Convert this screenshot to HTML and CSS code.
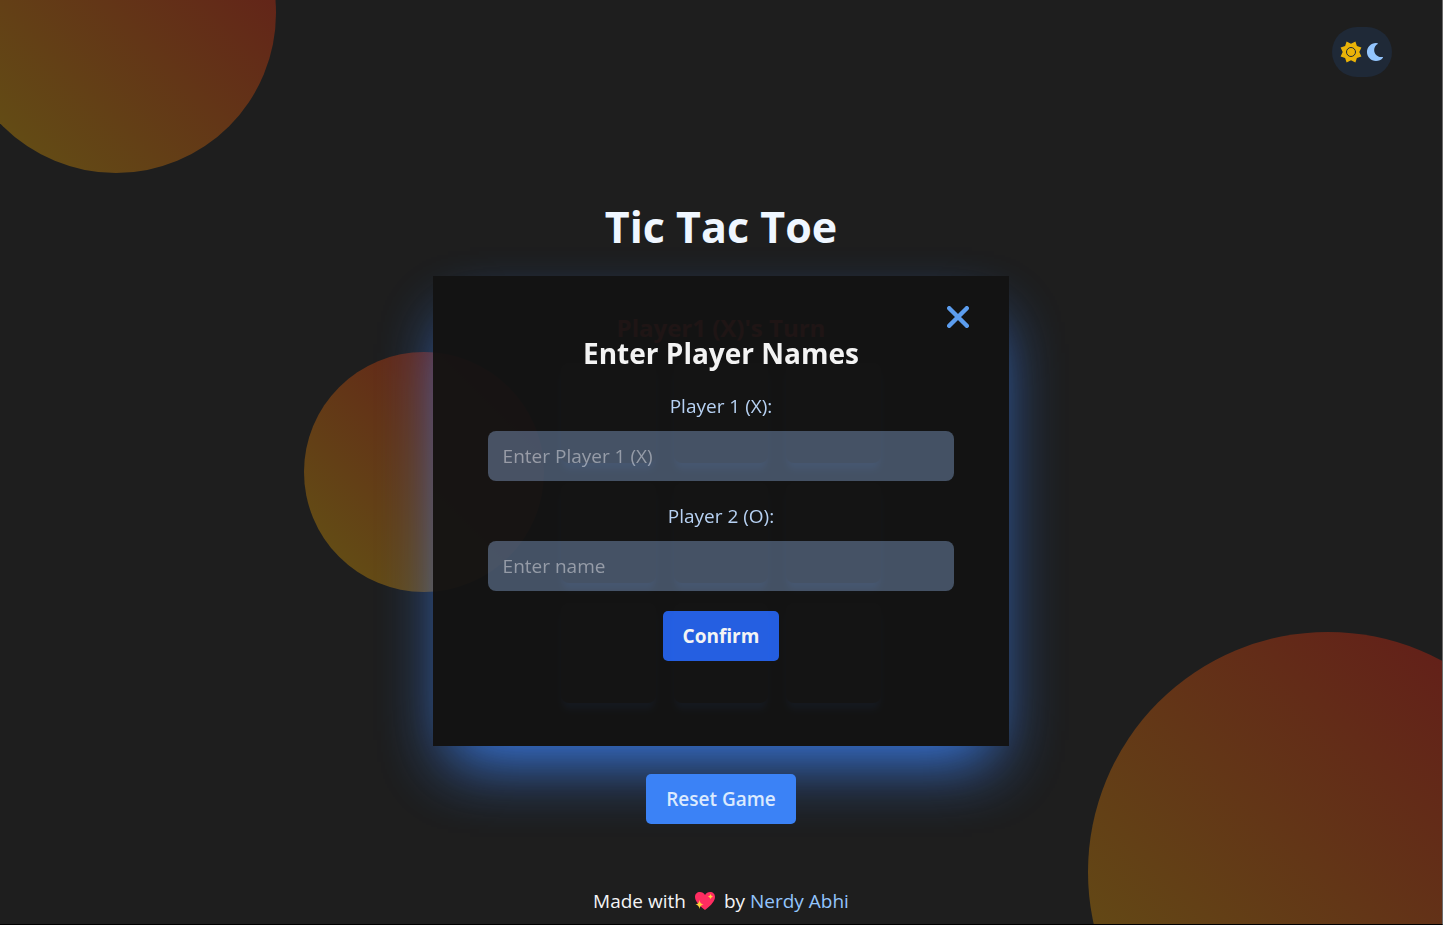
FILE: index.html
```
<!DOCTYPE html>
<html lang="en">
<head>
<meta charset="utf-8">
<title>Tic Tac Toe</title>
<link rel="stylesheet" href="styles.css">
</head>
<body>
<div class="page">
  <div class="circle circle-top"></div>
  <div class="circle circle-middle"></div>
  <div class="circle circle-bottom"></div>

  <header class="topbar">
    <button class="theme-toggle" type="button" aria-label="Toggle theme">
      <svg class="icon-sun" viewBox="-11 -11 22 22" aria-hidden="true">
        <path d="M8.300 0L10.400 4.400L5.900 5.900L4.400 10.400L0 8.300L-4.400 10.400L-5.900 5.900L-10.400 4.400L-8.300 0L-10.400 -4.400L-5.900 -5.900L-4.400 -10.400L0 -8.300L4.400 -10.400L5.900 -5.900L10.400 -4.400Z"/>
        <circle class="sun-ring" r="4.500"/>
      </svg>
      <svg class="icon-moon" viewBox="27 0 458 512" aria-hidden="true"><path d="M283 512C362 512 434 476 482 417C489 408 481 396 470 398C346 422 232 326 232 201C232 129 270 62 333 27C343 21 340 7 329 4A258 258 0 0 0 283 0C142 0 27 114 27 256C27 397 142 512 283 512Z"/></svg>
    </button>
  </header>

  <main class="game">
    <h1 class="title">Tic Tac Toe</h1>
    <section class="panel">
      <h2 class="turn">Player1 (X)'s Turn</h2>
      <div class="board">
        <button class="cell" type="button" aria-label="Cell 1"></button>
        <button class="cell" type="button" aria-label="Cell 2"></button>
        <button class="cell" type="button" aria-label="Cell 3"></button>
        <button class="cell" type="button" aria-label="Cell 4"></button>
        <button class="cell" type="button" aria-label="Cell 5"></button>
        <button class="cell" type="button" aria-label="Cell 6"></button>
        <button class="cell" type="button" aria-label="Cell 7"></button>
        <button class="cell" type="button" aria-label="Cell 8"></button>
        <button class="cell" type="button" aria-label="Cell 9"></button>
      </div>
      <form class="modal" role="dialog" aria-labelledby="modal-title">
        <button class="close" type="button" aria-label="Close">
          <svg viewBox="0 0 20 20" aria-hidden="true"><path d="M2 2L18 18M18 2L2 18"/></svg>
        </button>
        <h2 class="modal-title" id="modal-title">Enter Player Names</h2>
        <label class="label" for="p1">Player 1 (X):</label>
        <input class="field" id="p1" type="text" placeholder="Enter Player 1 (X)">
        <label class="label" for="p2">Player 2 (O):</label>
        <input class="field" id="p2" type="text" placeholder="Enter name">
        <button class="btn btn-confirm" type="button">Confirm</button>
      </form>
    </section>
    <button class="btn btn-reset" type="button">Reset Game</button>
  </main>

  <footer class="footer">
    <span>Made with</span>
    <svg class="heart" viewBox="0 0 22 20" role="img" aria-label="love">
      <path fill="#ff2d61" d="M11 19C8 16.500 1 11.500 1 6C1 3 3 1 6 1C8 1 10 2 11 4C12 2 14 1 16 1C19 1 21 3 21 6C21 11.500 14 16.500 11 19Z"/>
      <path fill="#ffd23e" d="M5.500 9Q6 13 9.500 13.500Q6 14 5.500 18Q5 14 1.500 13.500Q5 13 5.500 9ZM16.500 3Q17 5 19 5.500Q17 6 16.500 8Q16 6 14 5.500Q16 5 16.500 3Z"/>
    </svg>
    <span>by <a class="link" href="#">Nerdy Abhi</a></span>
  </footer>
</div>
</body>
</html>
```

FILE: styles.css
```
* {
  box-sizing: border-box;
}

body {
  margin: 0;
  background: #1e1e1e;
  color: #f3f4f6;
  font-family: "Open Sans", "Noto Sans", sans-serif;
  font-size: 19px;
  line-height: 30px;
}

h1,
h2 {
  margin: 0;
}

button,
input {
  font: inherit;
  border: 0;
}

.page {
  position: relative;
  display: flex;
  flex-direction: column;
  min-height: 100vh;
  overflow: hidden;
  border-right: 1px solid #6b6b6b;
  border-bottom: 1px solid #000;
}

.circle {
  position: absolute;
  border-radius: 50%;
  background: linear-gradient(to top right, #635414, #63171a);
}

.circle-top {
  top: -147px;
  left: -44px;
  width: 320px;
  height: 320px;
}

.circle-middle {
  top: 352px;
  left: 304px;
  width: 240px;
  height: 240px;
}

.circle-bottom {
  right: -126px;
  bottom: -188px;
  width: 480px;
  height: 480px;
}

.topbar {
  position: relative;
  display: flex;
  justify-content: flex-end;
  padding: 27px 50px 0;
}

.theme-toggle {
  display: flex;
  align-items: center;
  gap: 4px;
  height: 50px;
  padding: 0 8px;
  border-radius: 25px;
  background: #1f2937;
}

.icon-sun {
  width: 22px;
  height: 22px;
  fill: #eab308;
}

.sun-ring {
  fill: none;
  stroke: #1f2937;
  stroke-width: 1;
}

.icon-moon {
  width: 18px;
  height: 18px;
  fill: #93c5fd;
}

.game {
  position: relative;
  display: flex;
  flex: 1;
  flex-direction: column;
  align-items: center;
  justify-content: center;
  padding-top: 62px;
}

.title {
  margin-bottom: 24px;
  color: #eff6ff;
  font-size: 43px;
  line-height: 50px;
}

.panel {
  position: relative;
  width: 40%;
  min-width: 480px;
  padding: 34px 128px 43px;
}

.turn {
  margin-bottom: 18px;
  color: #ef4444;
  font-size: 24px;
  line-height: 35px;
  text-align: center;
}

.board {
  display: grid;
  grid-template-columns: repeat(3, 1fr);
  gap: 20px 18px;
}

.cell {
  height: 100px;
  border-radius: 8px;
  background: #2c2c2c;
  box-shadow: 0 8px 6px -2px #3b82f6;
}

.modal {
  position: absolute;
  inset: 0;
  display: flex;
  flex-direction: column;
  align-items: center;
  padding: 55px;
  background: #141414;
  box-shadow: 0 31px 62px -15px #3b82f6;
  opacity: 0.95;
}

.close {
  position: absolute;
  top: 30px;
  right: 40px;
  display: flex;
  padding: 0;
  background: none;
}

.close svg {
  width: 22px;
  height: 22px;
  fill: none;
  stroke: #60a5fa;
  stroke-width: 4;
  stroke-linecap: round;
}

.modal-title {
  margin-bottom: 15px;
  color: #fff;
  font-size: 28px;
  line-height: 45px;
}

.label {
  margin-bottom: 10px;
  color: #bfdbfe;
}

.field {
  width: 100%;
  height: 50px;
  margin-bottom: 20px;
  padding: 0 15px;
  border-radius: 8px;
  background: #475569;
  color: #fff;
}

.field::placeholder {
  color: #9ca3af;
  opacity: 1;
}

.btn {
  height: 50px;
  padding: 0 20px;
  border-radius: 5px;
  color: #fff;
}

.btn-confirm {
  background: #2563eb;
  font-weight: 700;
}

.btn-reset {
  position: relative;
  margin-top: 28px;
  background: #3b82f6;
  color: #dbeafe;
  font-weight: 600;
}

.footer {
  position: relative;
  display: flex;
  align-items: center;
  justify-content: center;
  gap: 8px;
  padding-bottom: 8px;
}

.heart {
  width: 22px;
  height: 20px;
}

.link {
  color: #93c5fd;
  text-decoration: none;
}
```
